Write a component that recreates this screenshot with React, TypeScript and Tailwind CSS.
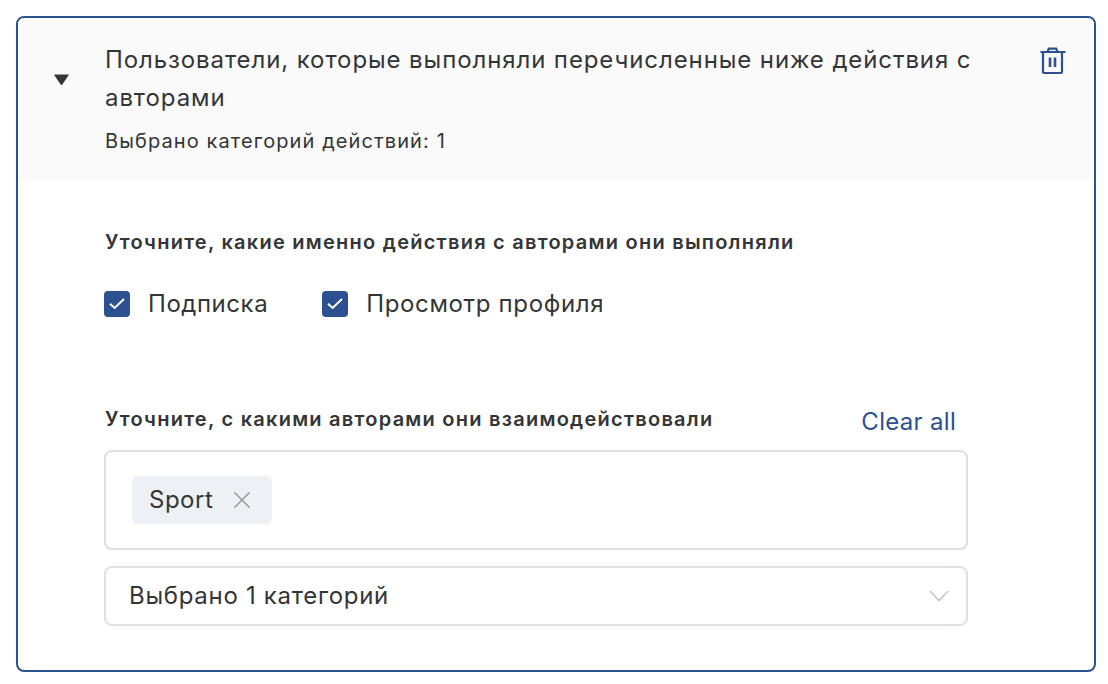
import React from "react";

function Check() {
  return (
    <span className="flex h-[26px] w-[26px] items-center justify-center rounded-[4px] bg-[#2c5090]">
      <svg width="16" height="12" viewBox="0 0 16 12" fill="none">
        <path d="M1 5.8 L5.6 10 L15 1" stroke="white" strokeWidth="2" />
      </svg>
    </span>
  );
}

export default function App() {
  return (
    <div className="h-[684px] w-[1108px] bg-white p-4 font-['Inter',sans-serif] text-[#333537]">
      <div className="h-[656px] w-[1080px] overflow-hidden rounded-[8px] border-2 border-[#2c5090]">
        <div className="flex h-[162px] bg-[#fafafa]">
          <div className="flex w-[87px] shrink-0 justify-center pt-[56px]">
            <svg width="17" height="12" viewBox="0 0 16 12">
              <path d="M1 1.5 Q0.5 0.5 1.5 0.5 H14.5 Q15.5 0.5 15 1.5 L8.8 10.5 Q8 11.5 7.2 10.5 Z" fill="#333537" />
            </svg>
          </div>
          <div className="w-[900px] pt-[23px]">
            <div className="text-[24px] leading-[38px] tracking-[0.9px]">
              Пользователи, которые выполняли перечисленные ниже действия с авторами
            </div>
            <div className="mt-[10px] text-[20px] leading-[28px] tracking-[1.1px]">Выбрано категорий действий: 1</div>
          </div>
          <div className="pl-[35px] pt-[29px]">
            <svg width="26" height="28" viewBox="0 0 26 28" fill="none" stroke="#2c5090" strokeWidth="2.2">
              <path d="M0.5 5 H25.5" />
              <path d="M7.5 5 L8.8 1.6 H16.2 L17.5 5" />
              <path d="M3 5 V25 Q3 26 4 26 H21 Q22 26 22 25 V5" />
              <path d="M10 10.5 V20 M15 10.5 V20" strokeWidth="2.6" />
            </svg>
          </div>
        </div>
        <div className="pl-[86px] pt-[48px]">
          <div className="pl-[1px] text-[20px] font-semibold leading-[28px] tracking-[1.25px]">
            Уточните, какие именно действия с авторами они выполняли
          </div>
          <div className="mt-[33px] flex items-center">
            <label className="flex items-center gap-[18px]">
              <Check />
              <span className="text-[24px] leading-[30px] tracking-[0.55px]">Подписка</span>
            </label>
            <label className="ml-[54px] flex items-center gap-[18px]">
              <Check />
              <span className="text-[24px] leading-[30px] tracking-[0.65px]">Просмотр профиля</span>
            </label>
          </div>
          <div className="mt-[86px] flex w-[852px] items-start justify-between">
            <div className="pl-[1px] text-[20px] font-semibold leading-[28px] tracking-[1.25px]">
              Уточните, с какими авторами они взаимодействовали
            </div>
            <button className="mt-[2px] text-[24px] leading-[30px] tracking-[0.3px] text-[#2c5090]">Clear all</button>
          </div>
          <div className="mt-[13px] h-[100px] w-[864px] rounded-[8px] border-2 border-[#dde1e5] pl-[26px] pt-[24px]">
            <span className="inline-flex h-[48px] w-[140px] items-center rounded-[6px] bg-[#edf0f4] pl-[17px]">
              <span className="text-[24px] leading-[30px] tracking-[0.5px]">Sport</span>
              <svg className="ml-[21px]" width="16" height="16" viewBox="0 0 16 16" stroke="#8f9294" strokeWidth="1.4">
                <path d="M0.5 0.5 L15.5 15.5 M15.5 0.5 L0.5 15.5" />
              </svg>
            </span>
          </div>
          <div className="mt-[16px] flex h-[60px] w-[864px] items-center justify-between rounded-[8px] border-2 border-[#dde1e5] pl-[23px] pr-[17px]">
            <span className="text-[24px] leading-[30px] tracking-[0.7px]">Выбрано 1 категорий</span>
            <svg width="20" height="12" viewBox="0 0 20 12" fill="none" stroke="#c4c6c8" strokeWidth="1.6">
              <path d="M1 1 L10 10.5 L19 1" />
            </svg>
          </div>
        </div>
      </div>
    </div>
  );
}
